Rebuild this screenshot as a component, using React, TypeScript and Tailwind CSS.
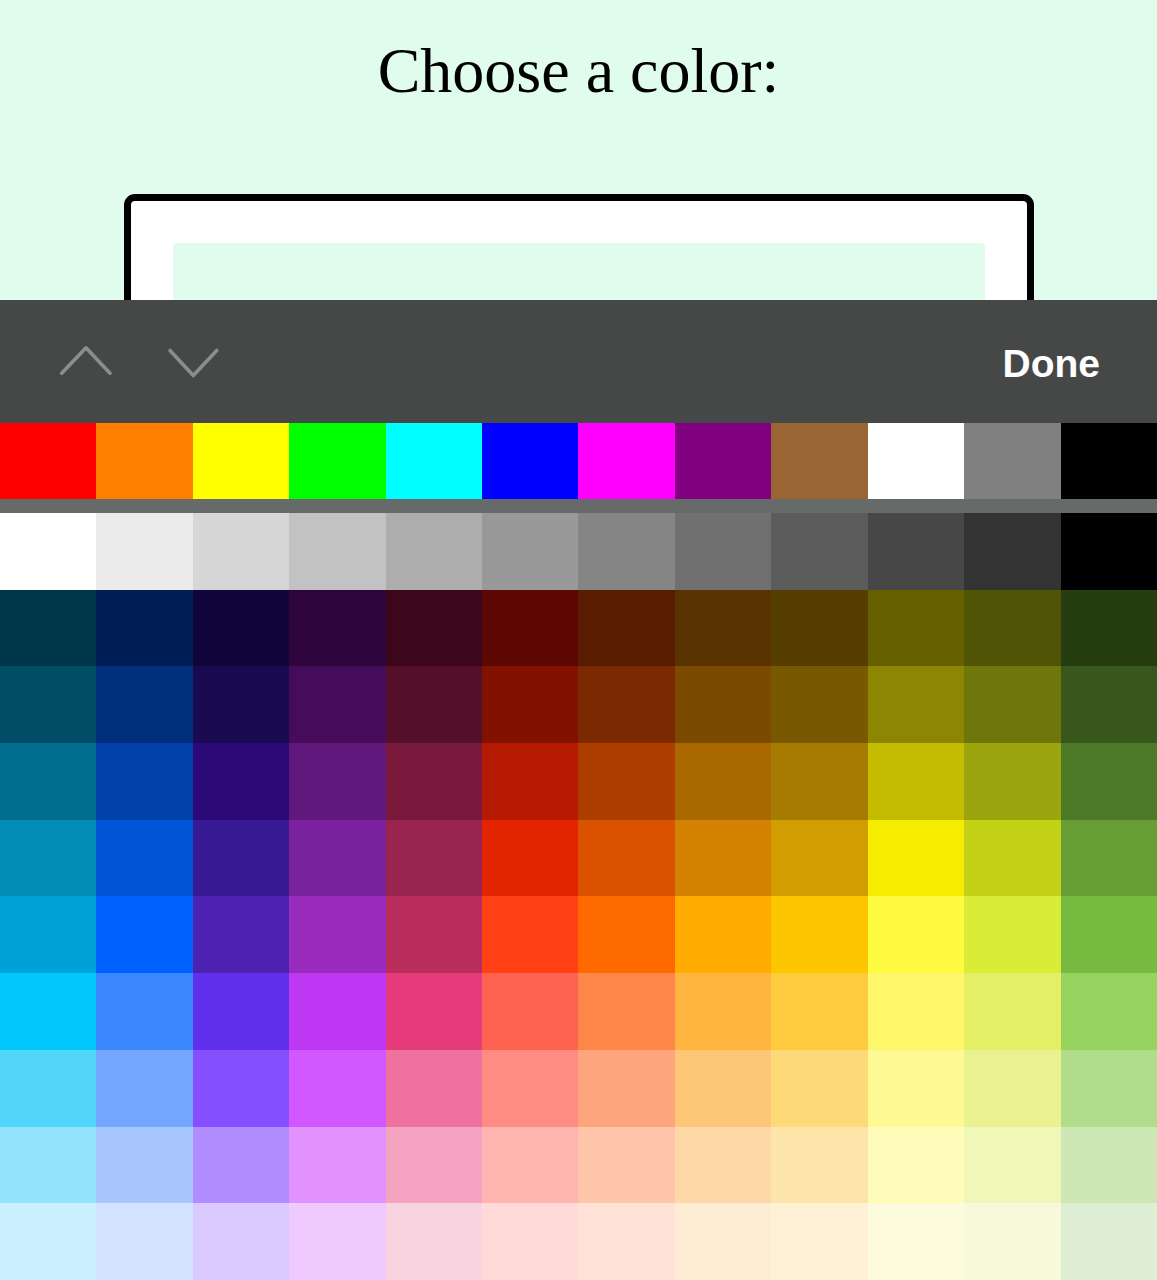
const basics = [
  "#ff0000", "#ff8000", "#ffff00", "#00ff00", "#00ffff", "#0000ff",
  "#ff00ff", "#800080", "#996633", "#ffffff", "#808080", "#000000",
];

const grid = [
  ["#ffffff", "#ebebeb", "#d6d6d6", "#c2c2c2", "#adadad", "#999999", "#858585", "#707070", "#5c5c5c", "#474747", "#333333", "#000000"],
  ["#00374a", "#011d57", "#11053b", "#2e063d", "#3c071b", "#5c0701", "#5a1c00", "#583300", "#563d00", "#666100", "#4f5504", "#263e0f"],
  ["#004d65", "#012f7b", "#1a0a52", "#450d59", "#551029", "#831100", "#7b2900", "#7a4a00", "#785800", "#8d8602", "#6f760a", "#38571a"],
  ["#016e8f", "#0042a9", "#2c0977", "#61187c", "#791a3d", "#b51a00", "#ad3e00", "#a96800", "#a67b01", "#c4bc00", "#9ba50e", "#4e7a27"],
  ["#008cb4", "#0056d6", "#371a94", "#7a219e", "#99244f", "#e22400", "#da5100", "#d38301", "#d19d01", "#f5ec00", "#c3d117", "#669d34"],
  ["#00a1d8", "#0061fe", "#4d22b2", "#982abc", "#b92d5d", "#ff4015", "#ff6a00", "#ffab01", "#fcc700", "#fefb41", "#d9ec37", "#76bb40"],
  ["#01c7fc", "#3a87fe", "#5e30eb", "#be38f3", "#e63b7a", "#fe6250", "#fe8648", "#feb43f", "#fecb3e", "#fff76b", "#e4ef65", "#96d35f"],
  ["#52d6fc", "#74a7ff", "#864ffe", "#d357fe", "#ee719e", "#ff8c82", "#fea57d", "#fec777", "#fed977", "#fff994", "#eaf28f", "#b1dd8b"],
  ["#93e3fc", "#a7c6ff", "#b18cfe", "#e292fe", "#f4a4c0", "#ffb5af", "#ffc5ab", "#fed9a8", "#fde4a8", "#fffbb9", "#f1f7b7", "#cde8b5"],
  ["#cbf0ff", "#d3e2ff", "#d9c9fe", "#efcafe", "#f9d3e0", "#ffdad8", "#ffe2d6", "#feecd4", "#fef1d5", "#fdfbdd", "#f6fadb", "#deeed4"],
];

export default function App() {
  return (
    <div className="flex h-[1280px] w-[1157px] flex-col overflow-hidden bg-[#dffcec]">
      {/* page behind the keyboard */}
      <div className="h-[300px] shrink-0 overflow-hidden">
        <h1 className="pt-[39px] text-center text-[64px] leading-none font-normal text-black [font-family:'Liberation_Serif',serif]">
          Choose a color:
        </h1>
        <div className="mx-auto mt-[91px] h-[400px] w-[910px] rounded-[11px] border-[7px] border-black bg-white p-[42px]">
          <div className="h-full w-full rounded-[4px] bg-[#dffcec]" />
        </div>
      </div>

      {/* input accessory bar */}
      <div className="flex h-[123px] shrink-0 items-center bg-[#454847] [font-family:'Liberation_Sans',sans-serif]">
        <button className="ml-[56px]" aria-label="Previous">
          <svg width="60" height="34" viewBox="0 0 60 34" fill="none">
            <path d="M5.7 28.2 L30 2.8 L54 28.2" stroke="#8c8e8d" strokeWidth="3.6" strokeLinecap="round" strokeLinejoin="round" />
          </svg>
        </button>
        <button className="ml-[47px]" aria-label="Next">
          <svg width="60" height="34" viewBox="0 0 60 34" fill="none">
            <path d="M7 5.5 L30.3 30.5 L53.7 5.5" stroke="#8c8e8d" strokeWidth="3.6" strokeLinecap="round" strokeLinejoin="round" />
          </svg>
        </button>
        <button className="mt-[3px] mr-[57px] ml-auto text-[39px] leading-none font-bold text-white">Done</button>
      </div>

      {/* basic colors */}
      <div className="grid h-[76px] shrink-0 grid-cols-12">
        {basics.map((c) => (
          <div key={c} style={{ backgroundColor: c }} />
        ))}
      </div>
      <div className="h-[14px] shrink-0 bg-[#666a68]" />

      {/* spectrum grid */}
      <div className="grid flex-1 grid-cols-12 grid-rows-10">
        {grid.flat().map((c, i) => (
          <div key={i} style={{ backgroundColor: c }} />
        ))}
      </div>
    </div>
  );
}
